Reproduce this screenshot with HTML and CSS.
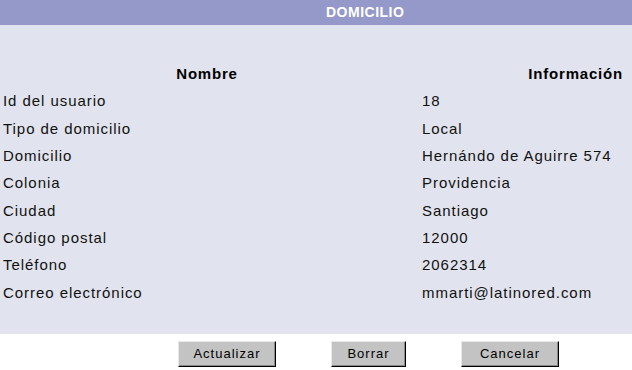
FILE: index.html
```html
<!DOCTYPE html>
<html lang="es">
<head>
<meta charset="utf-8">
<title>Domicilio</title>
<link rel="stylesheet" href="styles.css">
</head>
<body>
<div class="page">
  <div class="title-bar"><span class="title">DOMICILIO</span></div>
  <div class="panel">
    <table class="data">
      <thead>
        <tr><th class="col-name">Nombre</th><th class="col-info">Información</th></tr>
      </thead>
      <tbody>
        <tr><td>Id del usuario</td><td class="val">18</td></tr>
        <tr><td>Tipo de domicilio</td><td class="val">Local</td></tr>
        <tr><td>Domicilio</td><td class="val">Hernándo de Aguirre 574</td></tr>
        <tr><td>Colonia</td><td class="val">Providencia</td></tr>
        <tr><td>Ciudad</td><td class="val">Santiago</td></tr>
        <tr><td>Código postal</td><td class="val">12000</td></tr>
        <tr><td>Teléfono</td><td class="val">2062314</td></tr>
        <tr><td>Correo electrónico</td><td class="val">mmarti@latinored.com</td></tr>
      </tbody>
    </table>
  </div>
  <div class="actions">
    <button class="btn btn-wide" type="button">Actualizar</button>
    <button class="btn btn-narrow" type="button">Borrar</button>
    <button class="btn btn-wide" type="button">Cancelar</button>
  </div>
</div>
</body>
</html>
```

FILE: styles.css
```css
html, body {
  margin: 0;
  padding: 0;
  background: #ffffff;
}

body {
  font-family: "Liberation Sans", Arial, Helvetica, sans-serif;
  color: #000;
  width: 632px;
  height: 370px;
  overflow: hidden;
}

.title-bar {
  height: 25px;
  background: #9599c9;
  display: flex;
  align-items: center;
  padding-left: 326px;
}

.title {
  color: #ffffff;
  font-weight: bold;
  font-size: 14px;
  letter-spacing: 0.5px;
  line-height: 25px;
}

.panel {
  background: #e1e4ee;
  padding-top: 35px;
  padding-bottom: 28px;
}

.data {
  width: 100%;
  border-collapse: collapse;
  font-size: 15px;
  letter-spacing: 0.95px;
  color: #111;
}

.data th,
.data td {
  height: 27.3px;
  padding: 0;
  vertical-align: middle;
}

.data th {
  font-weight: bold;
  letter-spacing: 0.8px;
  color: #000;
}

.col-name {
  width: 414px;
  text-align: center;
}

.col-info {
  text-align: right;
  padding-right: 9px !important;
}

.data td {
  padding-left: 3px;
}

.data td.val {
  padding-left: 8px;
}

.actions {
  display: flex;
  gap: 55px;
  padding-left: 178px;
  padding-top: 7px;
}

.btn {
  height: 26px;
  background: #c3c3c3;
  border: 1px solid;
  border-color: #e8e8e8 #000000 #000000 #e8e8e8;
  box-shadow: inset -1px -1px 0 #8a8a8a;
  font-family: "Liberation Sans", Arial, sans-serif;
  font-size: 13px;
  letter-spacing: 1px;
  color: #000;
  padding: 0;
  margin: 0;
}

.btn-wide {
  width: 98px;
}

.btn-narrow {
  width: 75px;
}
```
